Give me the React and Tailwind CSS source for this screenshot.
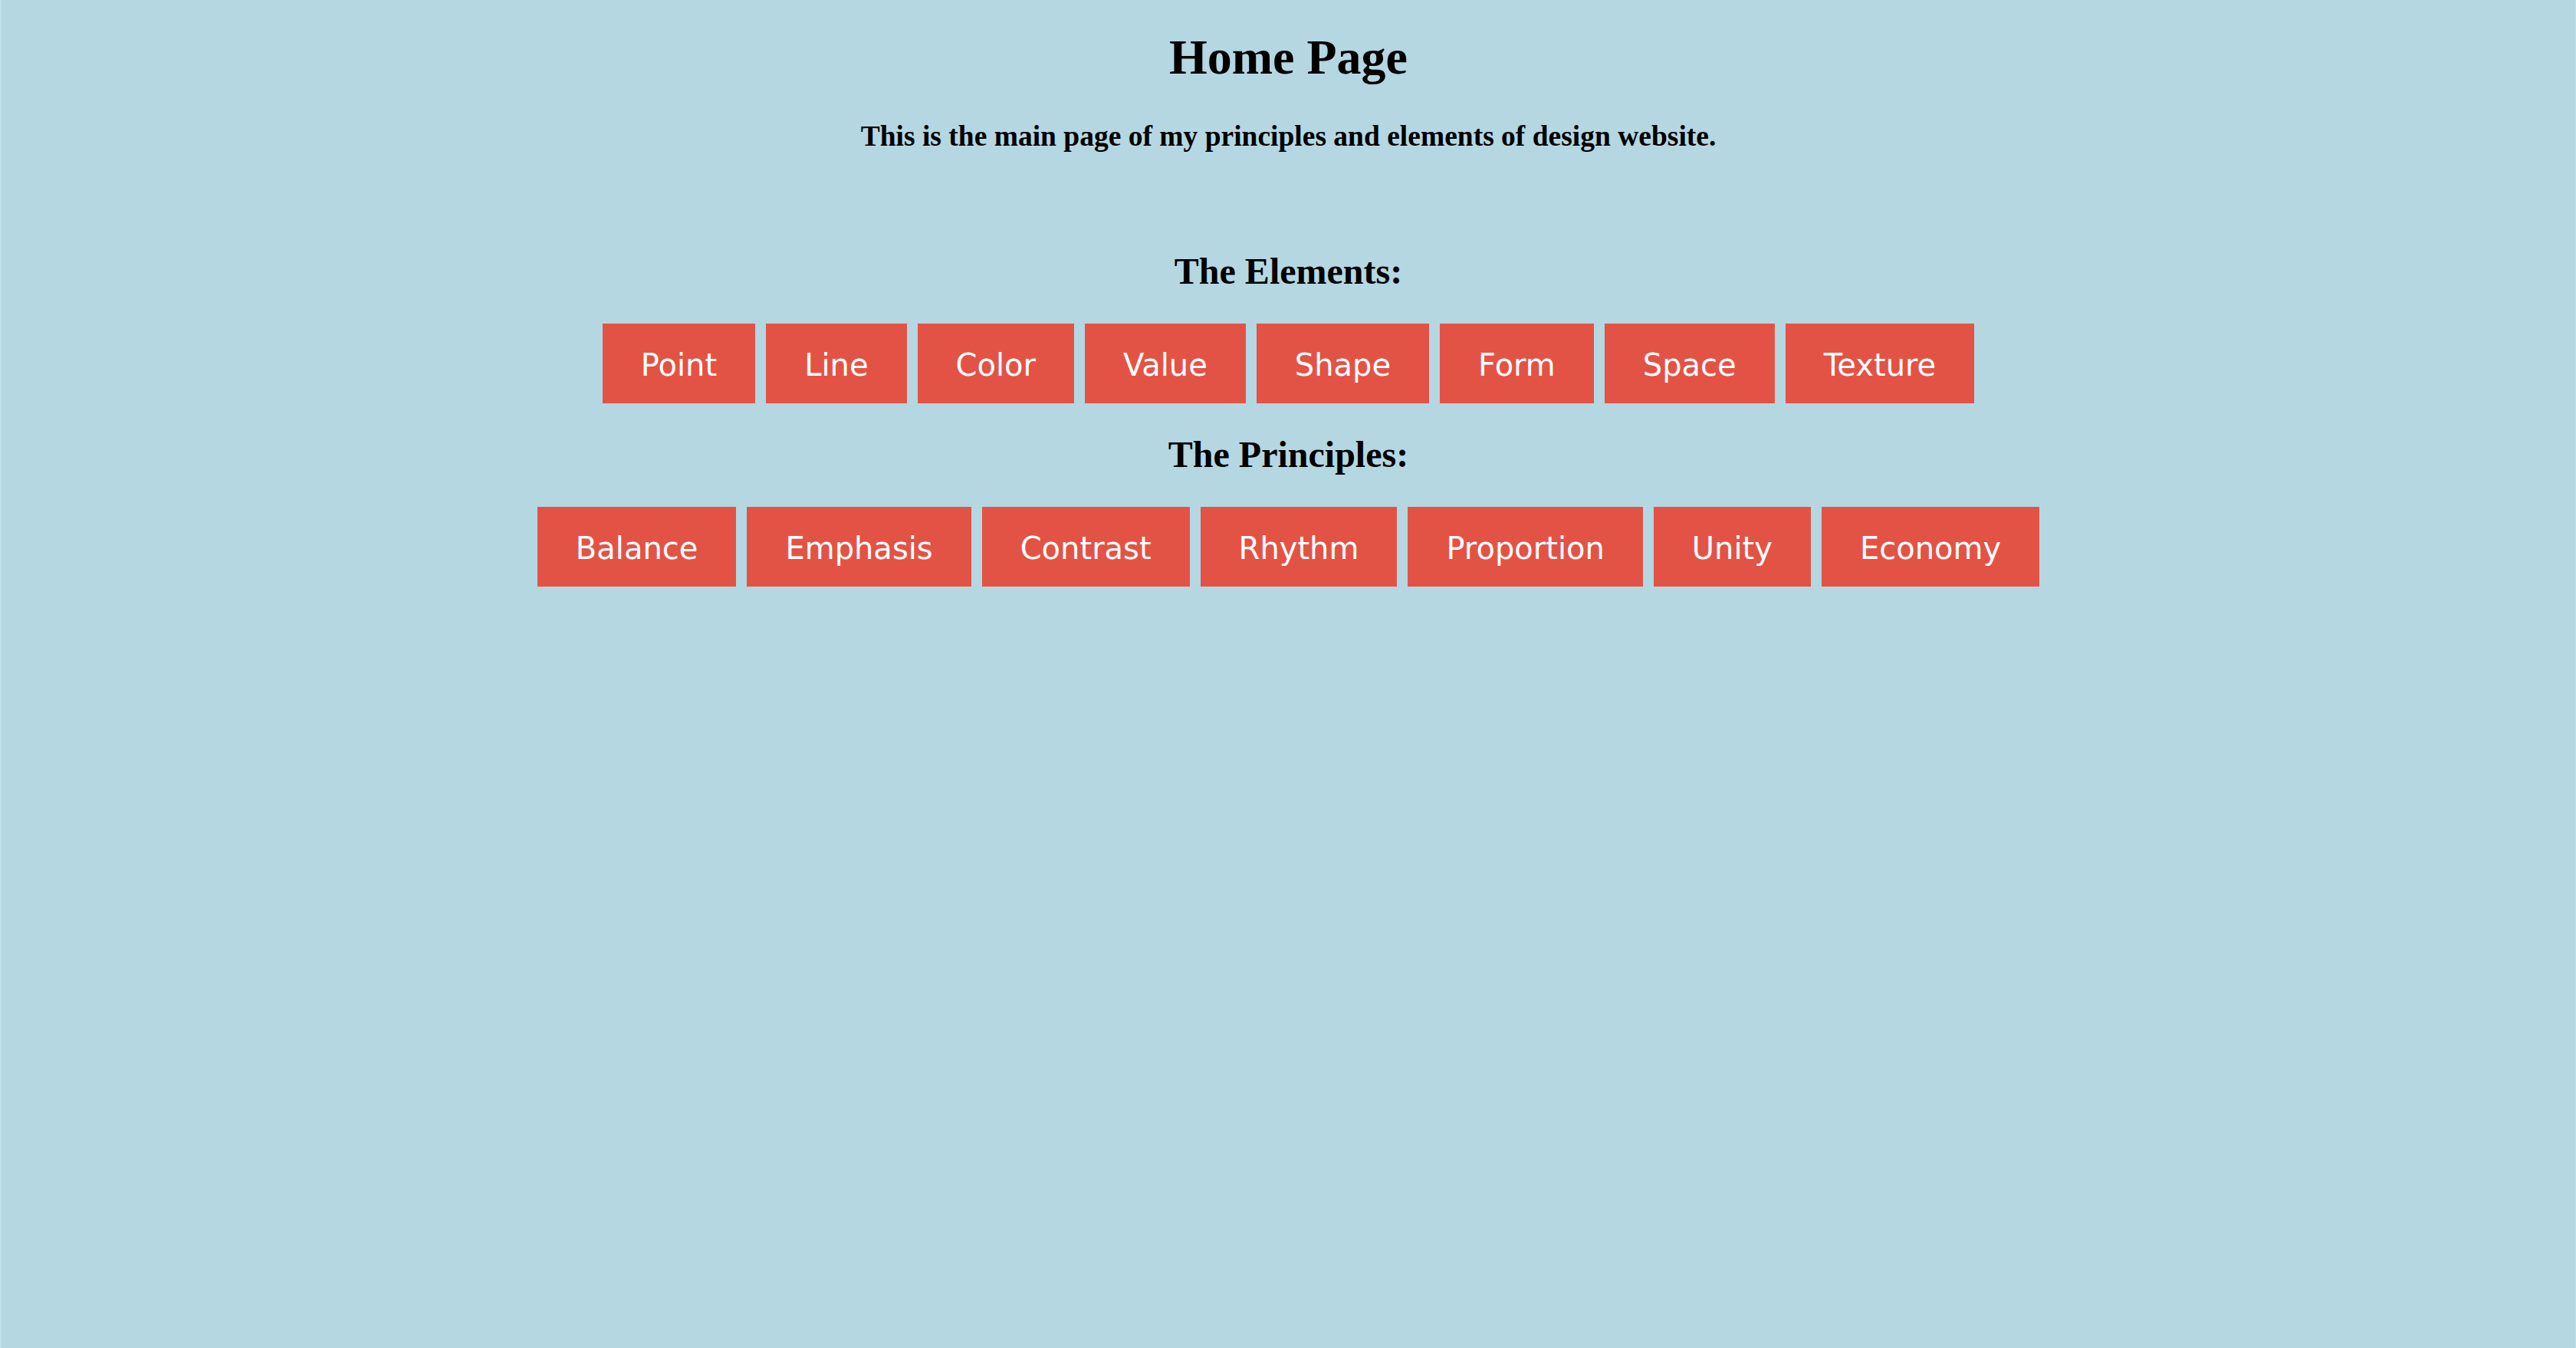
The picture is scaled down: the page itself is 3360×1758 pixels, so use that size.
export default function App() {
  const elements = ["Point", "Line", "Color", "Value", "Shape", "Form", "Space", "Texture"];
  const principles = ["Balance", "Emphasis", "Contrast", "Rhythm", "Proportion", "Unity", "Economy"];
  const btn =
    "bg-[#e35345] text-white text-[40px] leading-[48px] pt-[30px] pb-[26px] px-[50px] font-['DejaVu_Sans','Verdana',sans-serif]";
  return (
    <div className="min-h-[1758px] w-full bg-[#b4d7e2] border-l-2 border-r border-[#c2dfe8] flex flex-col items-center text-black font-['Liberation_Serif','Times_New_Roman',serif]">
      <h1 className="mt-[38px] text-[64px] leading-[74px] font-bold">Home Page</h1>
      <h3 className="mt-[44px] text-[37.5px] leading-[43px] font-bold">
        This is the main page of my principles and elements of design website.
      </h3>
      <h2 className="mt-[127px] text-[48px] leading-[55px] font-bold">The Elements:</h2>
      <div className="mt-[41px] flex gap-[14px]">
        {elements.map((e) => (
          <div key={e} className={btn}>
            {e}
          </div>
        ))}
      </div>
      <h2 className="mt-[39px] text-[48px] leading-[55px] font-bold">The Principles:</h2>
      <div className="mt-[41px] flex gap-[14px]">
        {principles.map((e) => (
          <div key={e} className={btn}>
            {e}
          </div>
        ))}
      </div>
    </div>
  );
}
